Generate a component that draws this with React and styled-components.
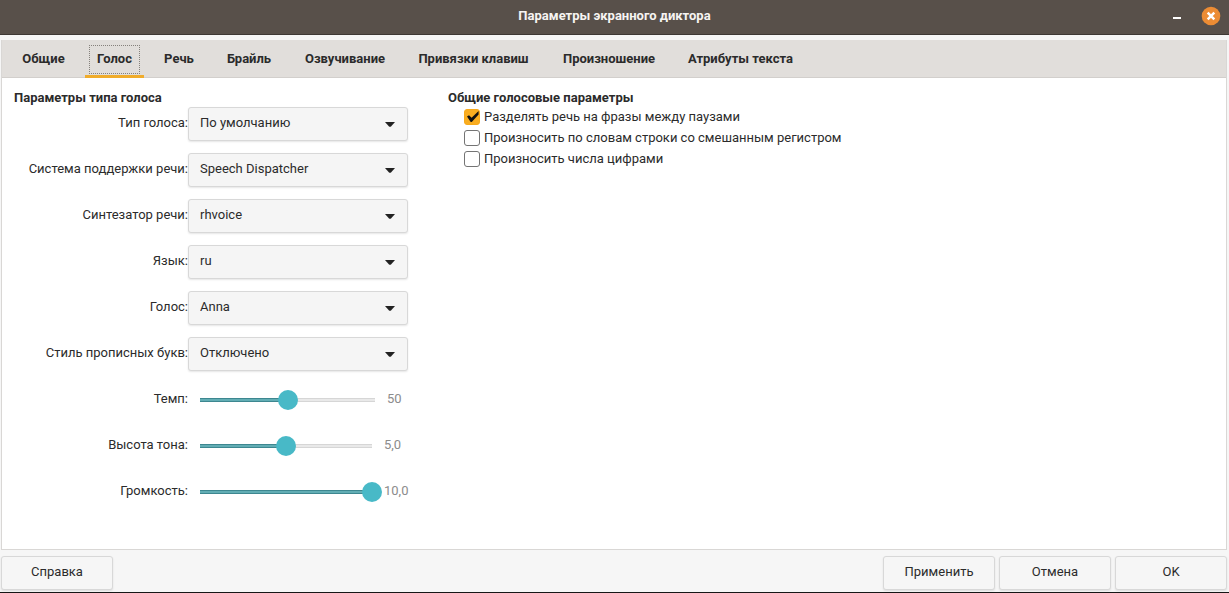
import React, { useState } from "react";
import styled, { createGlobalStyle } from "styled-components";

const GlobalStyle = createGlobalStyle`
  * { box-sizing: border-box; }
  body {
    margin: 0;
    background: #f6f6f6;
    color: #2b2b2b;
    font: 400 13px/20px Roboto, "Noto Sans", sans-serif;
  }
  button, select, input { font: inherit; color: inherit; margin: 0; }
`;

const Window = styled.div`
  display: flex;
  flex-direction: column;
  min-height: 100vh;
  border-bottom: 1px solid #161616;
`;

const TitleBar = styled.header`
  display: grid;
  grid-template-columns: 1fr auto 1fr;
  align-items: center;
  height: 35px;
  padding: 0 8px 2px;
  background: #58504a;
  border-bottom: 1px solid #3e3834;
`;

const Title = styled.h1`
  grid-column: 2;
  margin: 0;
  color: #f6f4f2;
  font-size: 13px;
  line-height: 20px;
  font-weight: 700;
`;

const WindowControls = styled.div`
  display: flex;
  justify-content: flex-end;
  gap: 14px;
`;

const WindowButton = styled.button`
  display: flex;
  padding: 0;
  border: 0;
  background: none;
`;

const Notebook = styled.main`
  flex: 1;
  display: flex;
  flex-direction: column;
  margin: 5px 2px 6px 1px;
  border: 1px solid #d9d7d5;
  border-top: 0;
  background: #fff;
`;

const TabList = styled.div`
  display: flex;
  gap: 8px;
  height: 38px;
  padding: 0 8px;
  background: #e1dedb;
  border-bottom: 1px solid #d2cfcc;
`;

const Tab = styled.button`
  min-width: ${(p) => p.$width}px;
  height: 38px;
  padding: 4px 4px 0;
  border: 0;
  border-bottom: 3px solid ${(p) => (p.$active ? "#f0ac2b" : "transparent")};
  background: none;
  font-weight: 700;
  white-space: nowrap;
`;

const TabLabel = styled.span`
  display: block;
  height: 29px;
  line-height: 26px;
  border: 1px dotted ${(p) => (p.$active ? "#85817c" : "transparent")};
`;

const Page = styled.div`
  display: flex;
  gap: 40px;
  padding: 10px 12px;
`;

const Section = styled.section`
  flex: none;
`;

const SectionTitle = styled.h2`
  margin: 0;
  font-size: 13px;
  line-height: 20px;
  font-weight: 700;
`;

const Fields = styled.div`
  display: grid;
  grid-template-columns: 174px 220px;
  row-gap: 12px;
  margin-top: -1px;
`;

const FieldLabel = styled.label`
  line-height: 32px;
  text-align: right;
  white-space: nowrap;
`;

const SelectBox = styled.div`
  display: grid;
  align-items: center;
  height: 34px;
`;

const Select = styled.select`
  grid-area: 1 / 1;
  width: 100%;
  height: 34px;
  padding: 0 32px 2px 11px;
  appearance: none;
  border: 1px solid #d8d8d8;
  border-radius: 3px;
  background: #f5f5f5;
  box-shadow: 0 1px 2px rgba(0, 0, 0, 0.1);
`;

const Arrow = styled.svg`
  grid-area: 1 / 1;
  justify-self: end;
  margin-right: 13px;
  pointer-events: none;
`;

const SliderBox = styled.div`
  display: flex;
  align-items: center;
  gap: 2px;
  height: 34px;
  padding-left: 2px;
`;

const Slider = styled.input`
  flex: 1;
  min-width: 0;
  height: 20px;
  appearance: none;
  background:
    linear-gradient(#3d8790 1px, #62adb4 1px 3px, #3d8790 3px) 10px 8px / calc((100% - 20px) * var(--level)) 4px no-repeat,
    linear-gradient(#d6d6d6 1px, #e9e9e9 1px 3px, #d6d6d6 3px) 10px 8px / calc(100% - 20px) 4px no-repeat;

  &::-webkit-slider-thumb {
    appearance: none;
    width: 20px;
    height: 20px;
    border-radius: 50%;
    background: #48b9c7;
  }
`;

const Value = styled.output`
  width: ${(p) => p.$width}px;
  padding-bottom: 2px;
  color: #8c8c8c;
  white-space: nowrap;
`;

const Checks = styled.div`
  display: grid;
  row-gap: 1px;
  padding-left: 16px;
  margin-top: -1px;
`;

const CheckLabel = styled.label`
  display: flex;
  align-items: center;
  gap: 4px;
`;

const CheckBox = styled.span`
  display: grid;
  place-items: center;
  width: 16px;
  height: 16px;
`;

const CheckInput = styled.input`
  grid-area: 1 / 1;
  width: 16px;
  height: 16px;
  appearance: none;
  border: 1px solid #747474;
  border-radius: 3px;
  background: #fff;

  &:checked {
    border-color: #f7a91b;
    background: #f9ad20;
  }
  & + svg { grid-area: 1 / 1; visibility: hidden; pointer-events: none; }
  &:checked + svg { visibility: visible; }
`;

const Footer = styled.footer`
  display: flex;
  gap: 4px;
  padding: 0 2px 2px 1px;
`;

const ActionButton = styled.button`
  width: 112px;
  height: 34px;
  margin-right: ${(p) => (p.$pushRest ? "auto" : "0")};
  padding: 0 0 2px;
  border: 1px solid #d8d8d8;
  border-radius: 3px;
  background: #f6f6f6;
  box-shadow: 0 1px 2px rgba(0, 0, 0, 0.1);
`;

const TABS = [
  ["Общие", 67],
  ["Голос", 59],
  ["Речь", 54],
  ["Брайль", 70],
  ["Озвучивание", 106],
  ["Привязки клавиш", 135],
  ["Произношение", 120],
  ["Атрибуты текста", 127],
];

const SELECTS = [
  ["type", "Тип голоса:", "По умолчанию"],
  ["system", "Система поддержки речи:", "Speech Dispatcher"],
  ["synth", "Синтезатор речи:", "rhvoice"],
  ["lang", "Язык:", "ru"],
  ["voice", "Голос:", "Anna"],
  ["caps", "Стиль прописных букв:", "Отключено"],
];

const SLIDERS = [
  { id: "rate", label: "Темп:", initial: 50, max: 100, digits: 0, width: 21 },
  { id: "pitch", label: "Высота тона:", initial: 5, max: 10, digits: 1, width: 24 },
  { id: "volume", label: "Громкость:", initial: 10, max: 10, digits: 1, width: 24 },
];

const CHECKS = [
  ["Разделять речь на фразы между паузами", true],
  ["Произносить по словам строки со смешанным регистром", false],
  ["Произносить числа цифрами", false],
];

function SelectField({ id, label, value }) {
  return (
    <>
      <FieldLabel htmlFor={id}>{label}</FieldLabel>
      <SelectBox>
        <Select id={id} defaultValue={value}>
          <option>{value}</option>
        </Select>
        <Arrow width="10" height="6" viewBox="0 0 10 6" aria-hidden="true">
          <path d="M0 1h10L6 5.4q-1 .9-2 0z" fill="#222" />
        </Arrow>
      </SelectBox>
    </>
  );
}

function SliderField({ id, label, initial, max, digits, width }) {
  const [value, setValue] = useState(initial);
  return (
    <>
      <FieldLabel htmlFor={id}>{label}</FieldLabel>
      <SliderBox>
        <Slider
          id={id}
          type="range"
          min="0"
          max={max}
          step={digits ? 0.1 : 1}
          value={value}
          onChange={(e) => setValue(Number(e.target.value))}
          style={{ "--level": value / max }}
        />
        <Value htmlFor={id} $width={width}>
          {value.toFixed(digits).replace(".", ",")}
        </Value>
      </SliderBox>
    </>
  );
}

export default function App() {
  const [active, setActive] = useState("Голос");
  return (
    <>
      <GlobalStyle />
      <Window>
        <TitleBar>
          <Title>Параметры экранного диктора</Title>
          <WindowControls>
            <WindowButton aria-label="Свернуть">
              <svg width="18" height="18" viewBox="0 0 18 18">
                <path d="M4 11h8v2H4z" fill="#fff" />
              </svg>
            </WindowButton>
            <WindowButton aria-label="Закрыть">
              <svg width="20" height="20" viewBox="0 0 20 20">
                <circle cx="10" cy="10" r="9.3" fill="#ec8c34" />
                <path d="M6.7 6.7l6.6 6.6M13.3 6.7l-6.6 6.6" stroke="#fff" strokeWidth="2.5" />
              </svg>
            </WindowButton>
          </WindowControls>
        </TitleBar>
        <Notebook>
          <TabList role="tablist">
            {TABS.map(([name, width]) => (
              <Tab
                key={name}
                role="tab"
                aria-selected={name === active}
                $active={name === active}
                $width={width}
                onClick={() => setActive(name)}
              >
                <TabLabel $active={name === active}>{name}</TabLabel>
              </Tab>
            ))}
          </TabList>
          <Page>
            <Section>
              <SectionTitle>Параметры типа голоса</SectionTitle>
              <Fields>
                {SELECTS.map(([id, label, value]) => (
                  <SelectField key={id} id={id} label={label} value={value} />
                ))}
                {SLIDERS.map((s) => (
                  <SliderField key={s.id} {...s} />
                ))}
              </Fields>
            </Section>
            <Section>
              <SectionTitle>Общие голосовые параметры</SectionTitle>
              <Checks>
                {CHECKS.map(([text, checked]) => (
                  <CheckLabel key={text}>
                    <CheckBox>
                      <CheckInput type="checkbox" defaultChecked={checked} />
                      <svg width="16" height="16" viewBox="0 0 16 16" aria-hidden="true">
                        <path d="M3 7.6l2-1.4 2.6 2.6L14.6 2v3.4L8 12.8q-.8.6-1.5 0z" fill="#111" />
                      </svg>
                    </CheckBox>
                    {text}
                  </CheckLabel>
                ))}
              </Checks>
            </Section>
          </Page>
        </Notebook>
        <Footer>
          <ActionButton $pushRest>Справка</ActionButton>
          <ActionButton>Применить</ActionButton>
          <ActionButton>Отмена</ActionButton>
          <ActionButton>OK</ActionButton>
        </Footer>
      </Window>
    </>
  );
}
